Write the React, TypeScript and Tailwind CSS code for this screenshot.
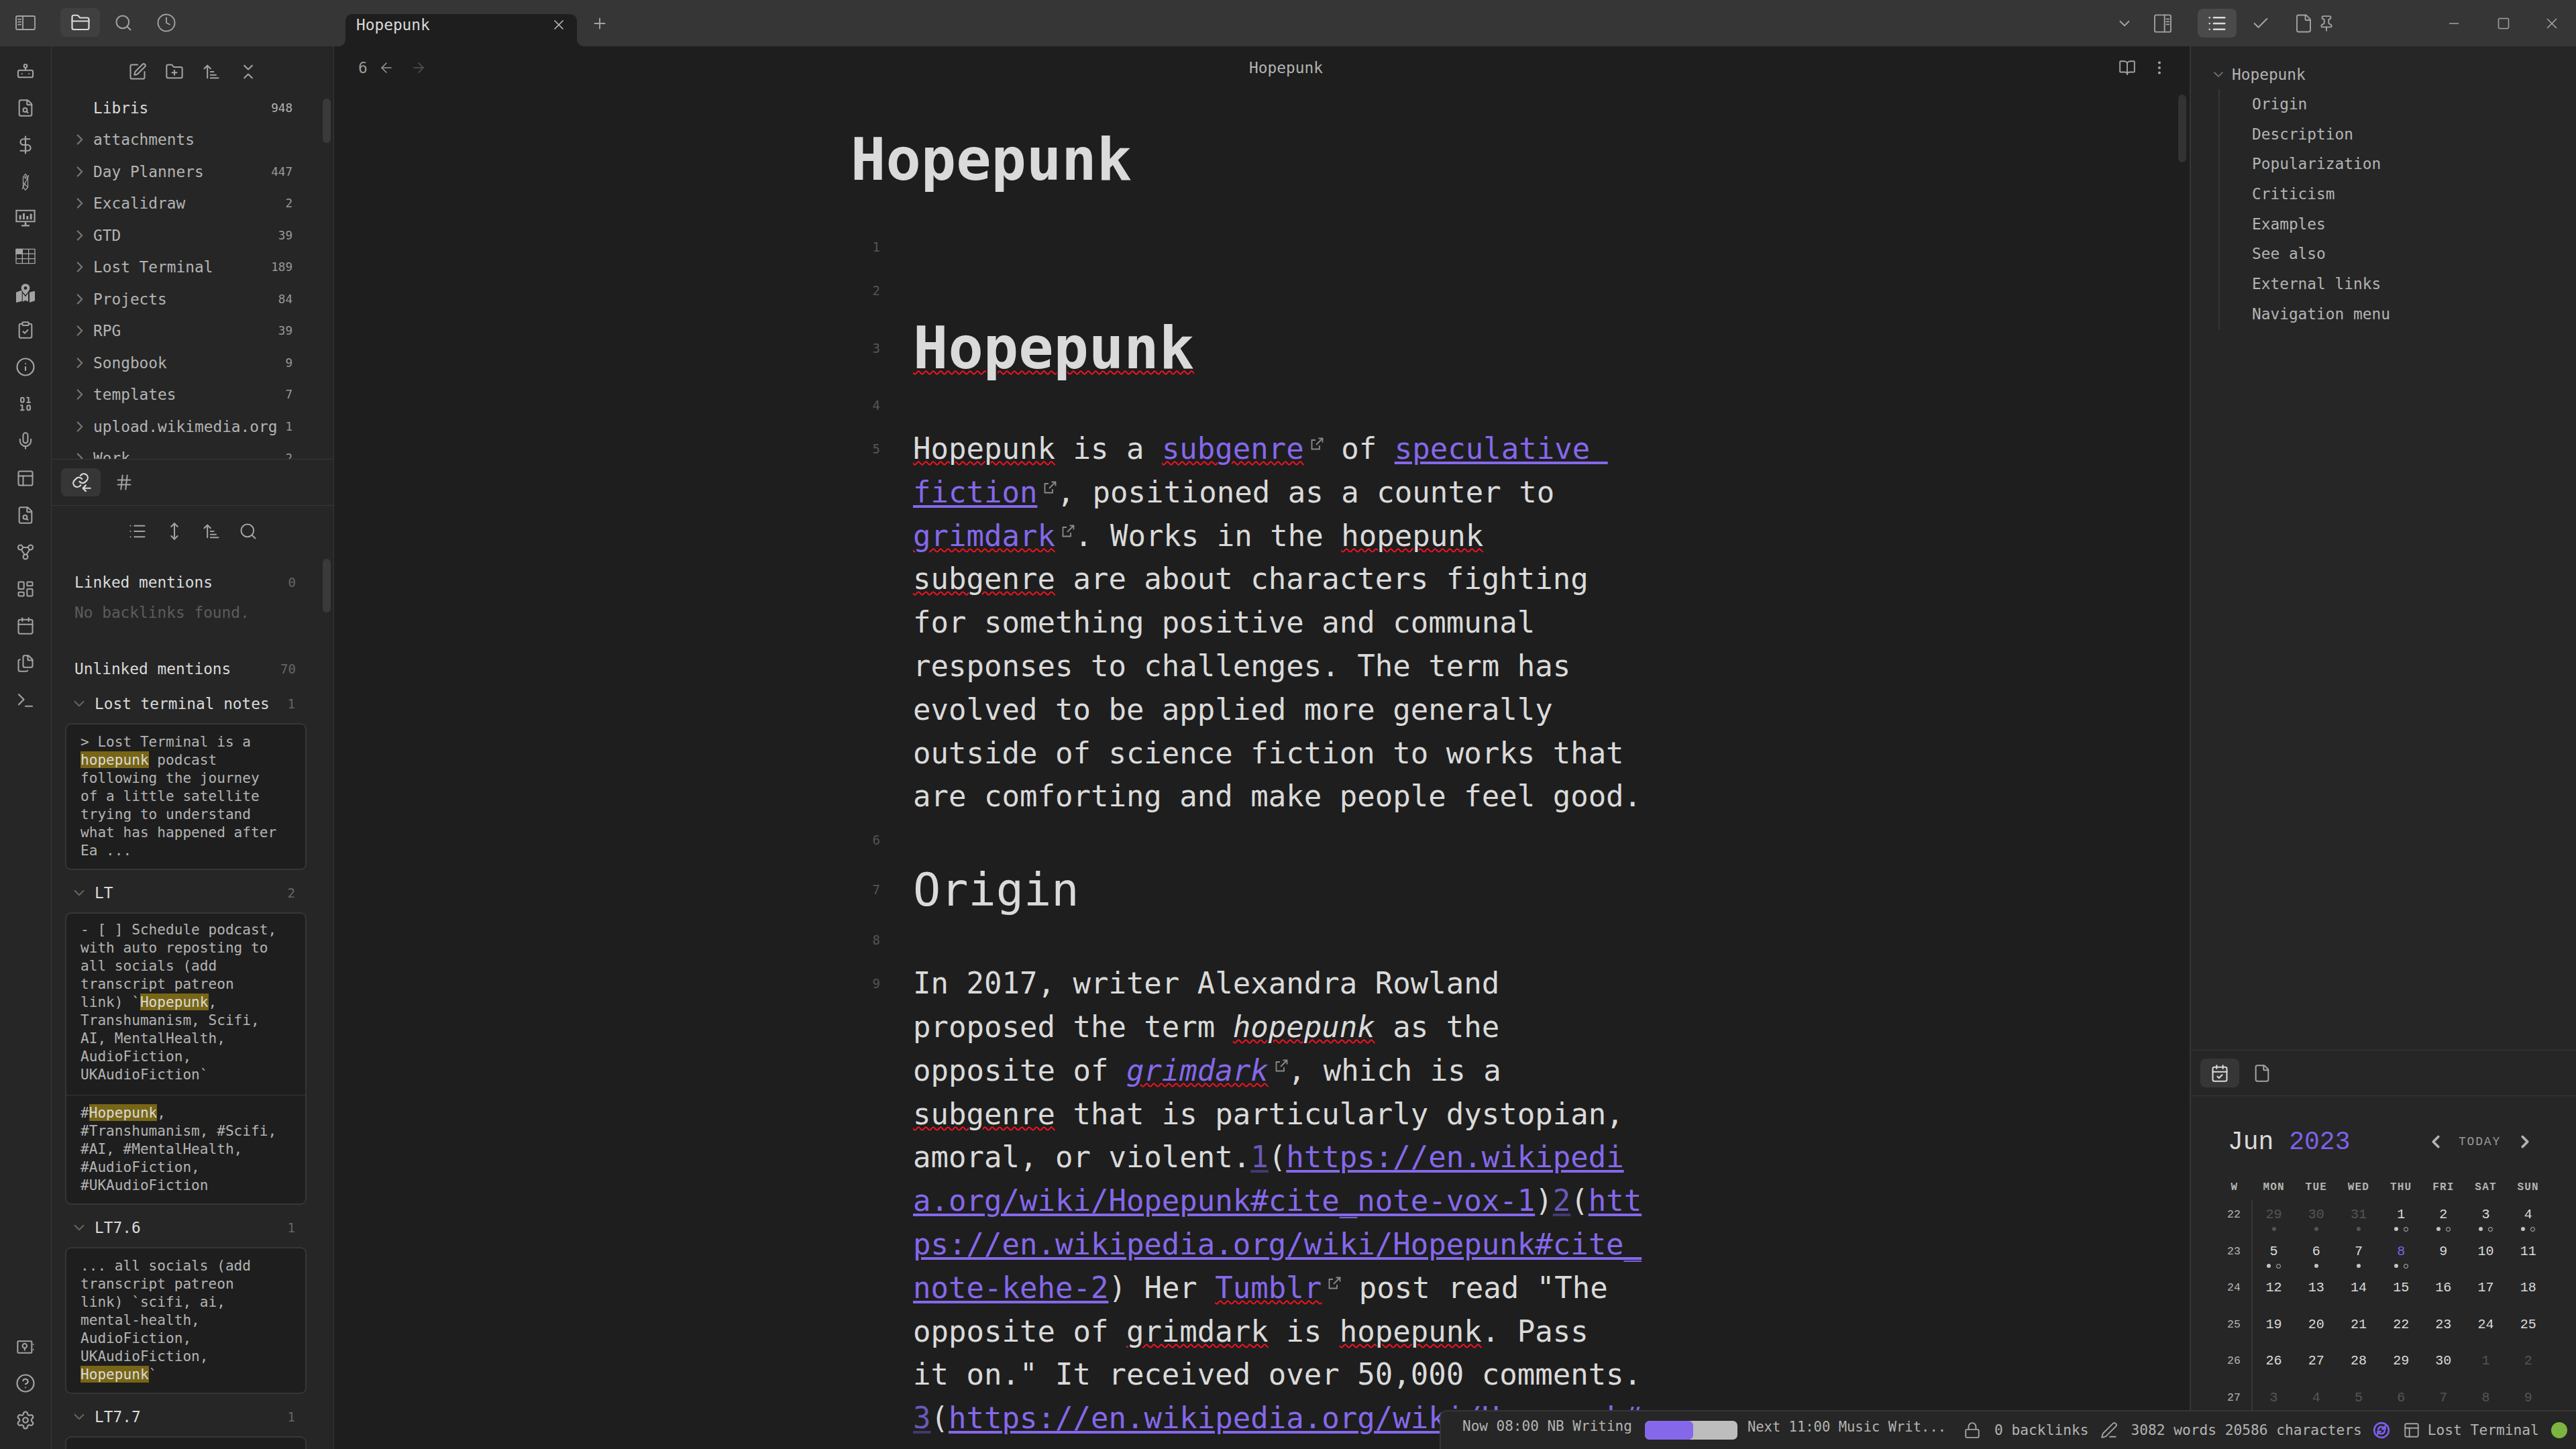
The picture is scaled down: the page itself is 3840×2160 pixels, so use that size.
import React from "react";
import {
  ArrowLeft, ArrowRight, ArrowUpNarrowWide, BookOpen, Calendar, CalendarCheck, Check, ChevronDown, ChevronLeft,
  ChevronRight, ChevronsDownUp, CircleHelp, Clock, ClipboardCheck, DollarSign, EllipsisVertical, File, FileSearch,
  Files, FolderClosed, FolderPlus, Hash, Info, LayoutDashboard, List, Lock, Mic, Minus, MoveVertical, PanelsTopLeft,
  PenLine, Pin, Plus, Search, Settings, Square, SquarePen, Terminal, Binary, X,
} from "lucide-react";

// ─── Small drawn icons ────────────────────────────────────────────────────────

function Svg({ size = 28, sw = 1.75, children }: { size?: number; sw?: number; children: React.ReactNode }) {
  return (
    <svg width={size} height={size} viewBox="0 0 24 24" fill="none" stroke="currentColor" strokeWidth={sw} strokeLinecap="round" strokeLinejoin="round">
      {children}
    </svg>
  );
}

const PanelLeftIcon = () => (
  <Svg size={32} sw={1.4}>
    <rect x="1.5" y="4.5" width="21" height="15" rx="1.5" />
    <path d="M9 4.5v15M3.8 8h3M3.8 11h3M3.8 14h3" />
  </Svg>
);
const PanelRightIcon = () => (
  <Svg size={32} sw={1.4}>
    <rect x="3" y="2.5" width="18" height="19" rx="1.5" />
    <path d="M14 2.5v19M16 7h3M16 10h3M16 13h3" />
  </Svg>
);
const BotIcon = () => (
  <Svg>
    <rect x="2.5" y="11" width="19" height="9" rx="2" />
    <circle cx="12" cy="5.5" r="2" />
    <path d="M12 7.5V11M7.5 15.5h.01M16.5 15.5h.01" />
  </Svg>
);
const TagOffIcon = () => (
  <Svg sw={1.1}>
    <path d="M9 6l3-4 3 4v13l-3 3.5L9 19z" />
    <circle cx="12" cy="6.5" r="1" />
    <path d="M8 21L16 4M9 13l6 6" />
  </Svg>
);
const ChartScreenIcon = () => (
  <svg width={32} height={32} viewBox="0 0 24 24" fill="currentColor">
    <path fillRule="evenodd" d="M1 2h22v14H1zM2.6 3.6v10.8h18.8V3.6z" />
    <path d="M5 8h2.2v5H5zM9 6h2.2v7H9zM13 9h2.2v4H13zM17 6.5h2.2V13H17zM11 16h2v3h3.500v1.600h-9V19H11z" />
  </svg>
);
const TableIcon = () => (
  <Svg size={32} sw={1}>
    <rect x="1.500" y="4" width="21" height="16" />
    <rect x="1.500" y="4" width="7" height="5.300" fill="currentColor" />
    <path d="M1.500 9.300h21M1.500 14.700h21M8.500 4v16M15.500 4v16" />
  </Svg>
);
const MapPinIcon = () => (
  <svg width={32} height={32} viewBox="0 0 24 24" fill="currentColor">
    <path d="M1.500 11L7 9l1 1v11l-6.500 1.500zM16.500 11l6-1.500v11l-6 2zM8.800 12l3.200 4 3-4v9.500l-3-1.500-3.200 1.500z" />
    <path fillRule="evenodd" d="M12 1.500a4.800 4.800 0 0 1 4.800 4.800c0 3-4.800 7.700-4.800 7.700S7.200 9.300 7.200 6.300A4.800 4.800 0 0 1 12 1.500zm0 3a1.800 1.800 0 1 0 0 3.600 1.800 1.800 0 0 0 0-3.600z" />
  </svg>
);
const NodesIcon = () => (
  <Svg>
    <circle cx="5.500" cy="6" r="3" />
    <circle cx="18.500" cy="6" r="3" />
    <circle cx="12" cy="18" r="3" />
    <path d="M7 9c1 3 3 4 4 6.500M17 9c-1 3-3 4-4 6.500M8.500 6h7" />
  </Svg>
);
const VaultIcon = () => (
  <Svg>
    <rect x="2" y="4.500" width="18" height="15" rx="1" />
    <circle cx="11" cy="10.500" r="2.800" />
    <path d="M11 13.300v2.700M22 8.500v.01M22 15.500v.01" />
  </Svg>
);
const BacklinkIcon = () => (
  <Svg size={30}>
    <path d="M10 11a4.600 4.600 0 0 0 6.900.5l2-2a4.700 4.700 0 0 0-6.600-6.600l-1.200 1.100" />
    <path d="M13 8a4.600 4.600 0 0 0-6.900-.5l-2.500 2.500a4.700 4.700 0 0 0 6.600 6.600l1.300-1.200" />
    <path d="M23 19H14M17.500 15.500L14 19l3.500 3.500" />
  </Svg>
);
const SyncIcon = () => (
  <Svg size={26} sw={2.400}>
    <circle cx="12" cy="12" r="10" />
    <path d="M7.500 11a4.800 4.800 0 0 1 8.500-2l1 1.200M16.500 13a4.800 4.800 0 0 1-8.500 2l-1-1.200" />
    <path d="M17 6.500v3.800h-3.800M7 17.500v-3.800h3.800" />
  </Svg>
);
const ExternalIcon = () => (
  <svg width={19} height={19} viewBox="0 0 19 19" fill="none" stroke="#8a8a8a" strokeWidth={1.800} className="ml-[10px] inline-block align-top mt-[15px]">
    <path d="M7 4H1.500v13.500H13V12" />
    <path d="M8 11L17 2M11.500 1.500h6v6" />
  </svg>
);

// ─── Left rail ────────────────────────────────────────────────────────────────

const railTop: React.ReactNode[] = [
  <BotIcon />, <FileSearch size={28} strokeWidth={1.75} />, <DollarSign size={30} strokeWidth={1.75} />, <TagOffIcon />,
  <ChartScreenIcon />, <TableIcon />, <MapPinIcon />, <ClipboardCheck size={28} strokeWidth={1.75} />,
  <Info size={30} strokeWidth={1.75} />, <Binary size={28} strokeWidth={1.75} />, <Mic size={28} strokeWidth={1.75} />,
  <PanelsTopLeft size={28} strokeWidth={1.75} />, <FileSearch size={28} strokeWidth={1.75} />, <NodesIcon />,
  <LayoutDashboard size={28} strokeWidth={1.75} />, <Calendar size={28} strokeWidth={1.75} />, <Files size={28} strokeWidth={1.75} />,
  <Terminal size={30} strokeWidth={1.75} />,
];

function Rail() {
  return (
    <div className="w-[77px] shrink-0 bg-[#262626] border-r border-[#363636] flex flex-col justify-between pt-[9px] pb-[16px] text-[#a3a3a3]">
      <div className="flex flex-col">
        {railTop.map((icon, i) => (
          <div key={i} className="h-[55.200px] flex items-center justify-center">{icon}</div>
        ))}
      </div>
      <div className="flex flex-col">
        <div className="h-[54.5px] flex items-center justify-center"><VaultIcon /></div>
        <div className="h-[54.5px] flex items-center justify-center"><CircleHelp size={30} strokeWidth={1.75} /></div>
        <div className="h-[54.5px] flex items-center justify-center"><Settings size={30} strokeWidth={1.75} /></div>
      </div>
    </div>
  );
}

// ─── Left sidebar ─────────────────────────────────────────────────────────────

const folders: [string, string][] = [
  ["attachments", ""], ["Day Planners", "447"], ["Excalidraw", "2"], ["GTD", "39"], ["Lost Terminal", "189"],
  ["Projects", "84"], ["RPG", "39"], ["Songbook", "9"], ["templates", "7"], ["upload.wikimedia.org", "1"], ["Work", "2"],
];

function Toolbar({ children }: { children: React.ReactNode }) {
  return <div className="w-full flex items-center justify-center gap-[27px] text-[#a3a3a3]">{children}</div>;
}

function FileTree() {
  return (
    <div className="relative h-[616px] shrink-0 overflow-hidden border-b border-[#363636]">
      <div className="h-[68px] pt-[8px] flex">
        <Toolbar>
          <SquarePen size={28} strokeWidth={1.75} />
          <FolderPlus size={28} strokeWidth={1.75} />
          <ArrowUpNarrowWide size={28} strokeWidth={1.75} />
          <ChevronsDownUp size={28} strokeWidth={1.75} />
        </Toolbar>
      </div>
      <div className="h-[47.5px] flex items-center pl-[62px] pr-[61px] text-[#dadada]">
        <span className="flex-1 text-[22.8px]">Libris</span>
        <span className="text-[17.6px] text-[#b3b3b3]">948</span>
      </div>
      {folders.map(([name, count]) => (
        <div key={name} className="h-[47.5px] flex items-center pl-[29px] pr-[61px] text-[#b3b3b3]">
          <ChevronRight size={26} strokeWidth={2} className="text-[#777] shrink-0 mr-[7px]" />
          <span className="flex-1 text-[22.8px] whitespace-pre">{name}</span>
          <span className="text-[17.6px] text-[#999]">{count}</span>
        </div>
      ))}
      <div className="absolute left-[404px] top-[78px] w-[12px] h-[66px] rounded-[6px] bg-[#3a3a3a]" />
    </div>
  );
}

function Highlighted({ text }: { text: string }) {
  const parts = text.split(/(hopepunk)/i);
  return (
    <>
      {parts.map((p, i) =>
        /^hopepunk$/i.test(p) ? <mark key={i} className="bg-[#786616] text-[#dadada]">{p}</mark> : p
      )}
    </>
  );
}

function Snippet({ lines, className }: { lines: string[]; className: string }) {
  return (
    <div className={"pl-[21px] text-[21.100px] leading-[27px] text-[#b3b3b3] whitespace-pre " + className}>
      {lines.map((l, i) => <div key={i}><Highlighted text={l} /></div>)}
    </div>
  );
}

function GroupHead({ name, count }: { name: string; count: string }) {
  return (
    <div className="h-[44px] flex items-center pl-[29px] pr-[57px] text-[#dadada]">
      <ChevronDown size={26} strokeWidth={1.75} className="text-[#666] shrink-0 mr-[10px] -ml-[1px]" />
      <span className="flex-1 text-[22.800px] whitespace-pre">{name}</span>
      <span className="text-[19px] text-[#666]">{count}</span>
    </div>
  );
}

function Card({ children }: { children: React.ReactNode }) {
  return <div className="ml-[20px] w-[360px] mt-[7px] mb-[12px] bg-[#1e1e1e] border-2 border-[#363636] rounded-[9px] overflow-hidden">{children}</div>;
}

function Backlinks() {
  return (
    <div className="relative flex-1 overflow-hidden">
      <div className="h-[69px] border-b border-[#363636] flex items-start pt-[13px] pl-[14px] gap-[5px] text-[#a3a3a3]">
        <div className="w-[59px] h-[42px] rounded-[8px] bg-[#363636] flex items-center justify-center text-[#dadada]"><BacklinkIcon /></div>
        <div className="w-[59px] h-[42px] flex items-center justify-center"><Hash size={28} strokeWidth={1.75} /></div>
      </div>
      <div className="h-[76px] flex">
        <Toolbar>
          <List size={28} strokeWidth={1.75} />
          <MoveVertical size={28} strokeWidth={1.75} />
          <ArrowUpNarrowWide size={28} strokeWidth={1.75} />
          <Search size={28} strokeWidth={1.75} />
        </Toolbar>
      </div>
      <div className="mt-[15px] h-[46px] flex items-center pl-[34px] pr-[56px]">
        <span className="flex-1 text-[22.800px] text-[#dadada]">Linked mentions</span>
        <span className="text-[19px] text-[#666]">0</span>
      </div>
      <div className="h-[44px] flex items-center pl-[34px] text-[22.800px] text-[#5c5c5c]">No backlinks found.</div>
      <div className="mt-[40px] h-[44px] flex items-center pl-[34px] pr-[56px]">
        <span className="flex-1 text-[22.800px] text-[#dadada]">Unlinked mentions</span>
        <span className="text-[19px] text-[#666]">70</span>
      </div>
      <div className="mt-[8px]" />
      <GroupHead name="Lost terminal notes" count="1" />
      <Card>
        <Snippet className="pt-[12px] pb-[14px]" lines={["> Lost Terminal is a", "hopepunk podcast", "following the journey", "of a little satellite", "trying to understand", "what has happened after", "Ea ..."]} />
      </Card>
      <GroupHead name="LT" count="2" />
      <Card>
        <Snippet className="pt-[10px] pb-[17px] border-b border-[#363636]" lines={["- [ ] Schedule podcast,", "with auto reposting to", "all socials (add", "transcript patreon", "link) `Hopepunk,", "Transhumanism, Scifi,", "AI, MentalHealth,", "AudioFiction,", "UKAudioFiction`"]} />
        <Snippet className="pt-[12px] pb-[14px]" lines={["#Hopepunk,", "#Transhumanism, #Scifi,", "#AI, #MentalHealth,", "#AudioFiction,", "#UKAudioFiction"]} />
      </Card>
      <GroupHead name="LT7.6" count="1" />
      <Card>
        <Snippet className="pt-[12px] pb-[14px]" lines={["... all socials (add", "transcript patreon", "link) `scifi, ai,", "mental-health,", "AudioFiction,", "UKAudioFiction,", "Hopepunk`"]} />
      </Card>
      <GroupHead name="LT7.7" count="1" />
      <Card>
        <Snippet className="pt-[12px] pb-[14px]" lines={["... all socials (add"]} />
      </Card>
      <div className="absolute left-[404px] top-[148px] w-[12px] h-[80px] rounded-[6px] bg-[#3a3a3a]" />
    </div>
  );
}

// ─── Editor ───────────────────────────────────────────────────────────────────

function Spell({ children, className = "" }: { children: React.ReactNode; className?: string }) {
  return <span className={"underline decoration-wavy decoration-[#ff1020] decoration-[1.500px] underline-offset-[3px] " + className}>{children}</span>;
}

function Ref({ children, className = "" }: { children: React.ReactNode; className?: string }) {
  return <span className={"text-[#8568ea] underline decoration-[4px] decoration-[#8568ea] underline-offset-[4px] " + className}>{children}</span>;
}

const Note = ({ n }: { n: string }) => (
  <span className="text-[#6b58b8] underline decoration-[4px] decoration-[#43396f] underline-offset-[4px]">{n}</span>
);

function LineNo({ n, className }: { n: number; className: string }) {
  return <div className={"w-[93px] shrink-0 pr-[49px] text-right text-[19px] text-[#555] " + className}>{n}</div>;
}

function Para({ n, children }: { n: number; children: React.ReactNode }) {
  return (
    <div className="flex">
      <LineNo n={n} className="leading-[64.800px]" />
      <div className="text-[44px] leading-[64.800px] text-[#dadada] whitespace-pre">{children}</div>
    </div>
  );
}

function Blank({ n }: { n: number }) {
  return (
    <div className="flex h-[65px]">
      <LineNo n={n} className="leading-[65px]" />
    </div>
  );
}

function Editor() {
  return (
    <div className="relative flex-1 bg-[#1e1e1e] overflow-hidden">
      <div className="h-[64px] flex items-center text-[#a3a3a3]">
        <div className="w-[186px] shrink-0 pl-[36px] flex items-center">
          <span className="text-[22.800px] text-[#999]">6</span>
          <ArrowLeft size={24} strokeWidth={1.5} className="ml-[16px] text-[#999]" />
          <ArrowRight size={24} strokeWidth={1.5} className="ml-[24px] text-[#555]" />
        </div>
        <div className="flex-1 text-center text-[22.800px] text-[#b3b3b3]">Hopepunk</div>
        <div className="w-[114px] shrink-0 pl-[8px] flex items-center gap-[22px]">
          <BookOpen size={26} strokeWidth={1.75} />
          <EllipsisVertical size={26} strokeWidth={1.75} />
        </div>
      </div>
      <div className="pl-[770px]">
        <div className="h-[203px] pt-[55px] text-[87px] leading-[100px] font-bold text-[#dadada]">Hopepunk</div>
        <Blank n={1} />
        <Blank n={2} />
        <div className="flex h-[106px]">
          <LineNo n={3} className="leading-[106px]" />
          <div className="text-[87px] leading-[106px] font-bold text-[#dadada]"><Spell>Hopepunk</Spell></div>
        </div>
        <Blank n={4} />
        <Para n={5}>
          <div><Spell>Hopepunk</Spell> is a <Spell className="text-[#8568ea]">subgenre</Spell><ExternalIcon /> of <Ref>speculative </Ref></div>
          <div><Ref>fiction</Ref><ExternalIcon />, positioned as a counter to</div>
          <div><Spell className="text-[#8568ea]">grimdark</Spell><ExternalIcon />. Works in the <Spell>hopepunk</Spell></div>
          <div><Spell>subgenre</Spell> are about characters fighting</div>
          <div>for something positive and communal</div>
          <div>responses to challenges. The term has</div>
          <div>evolved to be applied more generally</div>
          <div>outside of science fiction to works that</div>
          <div>are comforting and make people feel good.</div>
        </Para>
        <Blank n={6} />
        <div className="flex h-[84px]">
          <LineNo n={7} className="leading-[82px]" />
          <div className="text-[68.500px] leading-[82px] text-[#dadada]">Origin</div>
        </div>
        <Blank n={8} />
        <Para n={9}>
          <div>In 2017, writer Alexandra Rowland</div>
          <div>proposed the term <Spell className="italic">hopepunk</Spell> as the</div>
          <div>opposite of <Spell className="italic text-[#8568ea]">grimdark</Spell><ExternalIcon />, which is a</div>
          <div><Spell>subgenre</Spell> that is particularly dystopian,</div>
          <div>amoral, or violent.<Note n="1" />(<Ref>https://en.wikipedi</Ref></div>
          <div><Ref>a.org/wiki/Hopepunk#cite_note-vox-1</Ref>)<Note n="2" />(<Ref>htt</Ref></div>
          <div><Ref>ps://en.wikipedia.org/wiki/Hopepunk#cite_</Ref></div>
          <div><Ref>note-kehe-2</Ref>) Her <Spell className="text-[#8568ea]">Tumblr</Spell><ExternalIcon /> post read "The</div>
          <div>opposite of <Spell>grimdark</Spell> is <Spell>hopepunk</Spell>. Pass</div>
          <div>it on." It received over 50,000 comments.</div>
          <div><Note n="3" />(<Ref>https://en.wikipedia.org/wiki/Hopepunk#</Ref></div>
        </Para>
      </div>
      <div className="absolute right-[5px] top-[72px] w-[12px] h-[101px] rounded-[6px] bg-[#333]" />
    </div>
  );
}

// ─── Right sidebar ────────────────────────────────────────────────────────────

const outline = ["Origin", "Description", "Popularization", "Criticism", "Examples", "See also", "External links", "Navigation menu"];

function Outline() {
  return (
    <div className="flex-1 pt-[20px] border-b border-[#363636] text-[22.800px] text-[#b3b3b3]">
      <div className="h-[44px] flex items-center pl-[29px]">
        <ChevronDown size={24} strokeWidth={1.75} className="text-[#777] mr-[8px]" />
        <span>Hopepunk</span>
      </div>
      <div className="ml-[41px] pl-[48px] border-l-2 border-[#363636]">
        {outline.map((t) => <div key={t} className="h-[44.700px] leading-[44.700px] whitespace-pre">{t}</div>)}
      </div>
    </div>
  );
}

type Dot = 0 | 1 | 2;
const weeks: { w: number; days: [string, Dot, boolean?][] }[] = [
  { w: 22, days: [["29", 1, true], ["30", 1, true], ["31", 1, true], ["1", 2], ["2", 2], ["3", 2], ["4", 2]] },
  { w: 23, days: [["5", 2], ["6", 1], ["7", 1], ["8", 2], ["9", 0], ["10", 0], ["11", 0]] },
  { w: 24, days: [["12", 0], ["13", 0], ["14", 0], ["15", 0], ["16", 0], ["17", 0], ["18", 0]] },
  { w: 25, days: [["19", 0], ["20", 0], ["21", 0], ["22", 0], ["23", 0], ["24", 0], ["25", 0]] },
  { w: 26, days: [["26", 0], ["27", 0], ["28", 0], ["29", 0], ["30", 0], ["1", 0, true], ["2", 0, true]] },
  { w: 27, days: [["3", 0, true], ["4", 0, true], ["5", 0, true], ["6", 0, true], ["7", 0, true], ["8", 0, true], ["9", 0, true]] },
];

function DayCell({ label, dot, dim, today }: { label: string; dot: Dot; dim?: boolean; today: boolean }) {
  const color = today ? "text-[#7d62e6]" : dim ? "text-[#555]" : "text-[#dadada]";
  return (
    <div className="h-[54.600px] flex flex-col items-center">
      <div className={"h-[40px] leading-[44px] text-[20px] " + color}>{label}</div>
      <div className="flex gap-[8px]">
        {dot > 0 && <span className={"w-[6px] h-[6px] rounded-full " + (dim ? "bg-[#555]" : "bg-[#c4c4c4]")} />}
        {dot === 2 && <span className="w-[7px] h-[7px] rounded-full border border-[#c4c4c4]" />}
      </div>
    </div>
  );
}

function CalendarPane() {
  const heads = ["MON", "TUE", "WED", "THU", "FRI", "SAT", "SUN"];
  return (
    <div className="h-[594px] shrink-0 overflow-hidden">
      <div className="h-[68px] border-b border-[#363636] flex items-center pl-[14px] gap-[5px] text-[#a3a3a3]">
        <div className="w-[58px] h-[43px] rounded-[8px] bg-[#363636] flex items-center justify-center text-[#dadada]"><CalendarCheck size={28} strokeWidth={1.75} /></div>
        <div className="w-[58px] h-[43px] flex items-center justify-center"><File size={28} strokeWidth={1.75} /></div>
      </div>
      <div className="pt-[39px] pl-[55px] pr-[61px] h-[97px] flex items-center font-['Liberation_Mono',monospace]">
        <div className="flex-1 text-[38px]">
          <span className="text-[#dadada]">Jun </span><span className="text-[#7d62e6]">2023</span>
        </div>
        <ChevronLeft size={30} strokeWidth={3} className="text-[#b3b3b3]" />
        <span className="ml-[19px] mr-[21px] text-[18px] tracking-[1.800px] text-[#999]">TODAY</span>
        <ChevronRight size={30} strokeWidth={3} className="text-[#b3b3b3]" />
      </div>
      <div className="mt-[20px] ml-[38px] grid grid-cols-[54px_repeat(7,63.200px)] font-['Liberation_Mono',monospace]">
        <div className="h-[38px] leading-[38px] text-center text-[16px] font-bold tracking-[1.200px] text-[#b3b3b3]">W</div>
        {heads.map((h) => <div key={h} className="h-[38px] leading-[38px] text-center text-[16px] font-bold tracking-[1.200px] text-[#b3b3b3]">{h}</div>)}
        {weeks.map((wk) => (
          <React.Fragment key={wk.w}>
            <div className="h-[54.600px] border-r-2 border-[#363636] text-center leading-[44px] text-[16.500px] text-[#b3b3b3]">{wk.w}</div>
            {wk.days.map(([d, dot, dim]) => (
              <DayCell key={d + String(dim)} label={d} dot={dot} dim={dim} today={wk.w === 23 && d === "8"} />
            ))}
          </React.Fragment>
        ))}
      </div>
    </div>
  );
}

function StatusBar() {
  return (
    <div className="absolute right-0 bottom-0 w-[1694px] h-[58px] bg-[#262626] border-t-2 border-l-2 border-[#363636] rounded-tl-[10px] flex items-center pl-[32px] text-[#b3b3b3] whitespace-pre">
      <span className="text-[21px] -translate-y-[5px]">Now 08:00 NB Writing</span>
      <div className="ml-[19px] w-[138px] h-[28px] rounded-[7px] bg-[#bdbdbd] overflow-hidden flex">
        <div className="w-[72px] bg-[#8568ea] rounded-[7px]" />
      </div>
      <span className="ml-[15px] text-[20.500px] -translate-y-[5px]">Next 11:00 Music Writ...</span>
      <Lock size={26} strokeWidth={1.75} className="ml-[26px] text-[#a3a3a3]" />
      <span className="ml-[20px] text-[21.200px]">0 backlinks</span>
      <PenLine size={26} strokeWidth={1.75} className="ml-[18px] text-[#a3a3a3]" />
      <span className="ml-[19px] text-[21.200px]">3082 words 20586 characters</span>
      <div className="ml-[16px] text-[#7d5ff0]"><SyncIcon /></div>
      <PanelsTopLeft size={26} strokeWidth={1.75} className="ml-[19px] text-[#a3a3a3]" />
      <span className="ml-[11px] text-[21.200px]">Lost Terminal</span>
      <span className="ml-[18px] w-[24px] h-[24px] rounded-full bg-[#7cb53f]" />
    </div>
  );
}

// ─── Title bar ────────────────────────────────────────────────────────────────

function TitleBar() {
  return (
    <div className="h-[69px] shrink-0 flex bg-[#1e1e1e] text-[#a3a3a3]">
      <div className="w-[515px] bg-[#363636] rounded-br-[10px] flex items-start pt-[12px]">
        <div className="w-[76px] h-[43px] flex items-center justify-center"><PanelLeftIcon /></div>
        <div className="w-[59px] ml-[14px] h-[43px] rounded-[8px] bg-[#404040] flex items-center justify-center text-[#dadada]"><FolderClosed size={30} strokeWidth={1.75} /></div>
        <div className="w-[59px] ml-[5px] h-[43px] flex items-center justify-center"><Search size={28} strokeWidth={1.75} /></div>
        <div className="w-[59px] ml-[5px] h-[43px] flex items-center justify-center"><Clock size={30} strokeWidth={1.5} /></div>
      </div>
      <div className="w-[345px] bg-[#363636]">
        <div className="mt-[21px] h-[48px] rounded-t-[10px] bg-[#1e1e1e] flex items-center pl-[16px] pr-[15px] pb-[16px]">
          <span className="flex-1 text-[22.800px] text-[#dadada]">Hopepunk</span>
          <X size={24} strokeWidth={1.75} className="text-[#b3b3b3]" />
        </div>
      </div>
      <div className="flex-1 bg-[#363636] rounded-bl-[10px] flex items-center pl-[21px] pr-[23px]">
        <Plus size={26} strokeWidth={1.75} />
        <div className="flex-1" />
        <ChevronDown size={26} strokeWidth={1.75} />
        <div className="ml-[28px]"><PanelRightIcon /></div>
        <div className="ml-[36px] w-[58px] h-[43px] rounded-[8px] bg-[#4a4a4a] flex items-center justify-center text-[#dadada]"><List size={30} strokeWidth={2} /></div>
        <Check size={28} strokeWidth={1.75} className="ml-[22px]" />
        <File size={30} strokeWidth={1.5} className="ml-[35px]" />
        <Pin size={26} strokeWidth={1.75} className="ml-[6px]" />
        <Minus size={22} strokeWidth={1.75} className="ml-[166px]" />
        <Square size={20} strokeWidth={1.800} className="ml-[53px]" />
        <X size={26} strokeWidth={1.5} className="ml-[49px]" />
      </div>
    </div>
  );
}

export default function App() {
  return (
    <div className="relative w-[3840px] h-[2160px] overflow-hidden bg-[#1e1e1e] font-['DejaVu_Sans_Mono','Liberation_Mono',monospace]">
      <div className="flex flex-col h-full">
        <TitleBar />
        <div className="flex-1 flex min-h-0">
          <Rail />
          <div className="w-[421px] shrink-0 bg-[#262626] border-r border-[#363636] flex flex-col min-h-0">
            <FileTree />
            <Backlinks />
          </div>
          <Editor />
          <div className="w-[576px] shrink-0 bg-[#262626] border-l-2 border-[#363636] flex flex-col min-h-0">
            <Outline />
            <CalendarPane />
          </div>
        </div>
      </div>
      <StatusBar />
    </div>
  );
}
